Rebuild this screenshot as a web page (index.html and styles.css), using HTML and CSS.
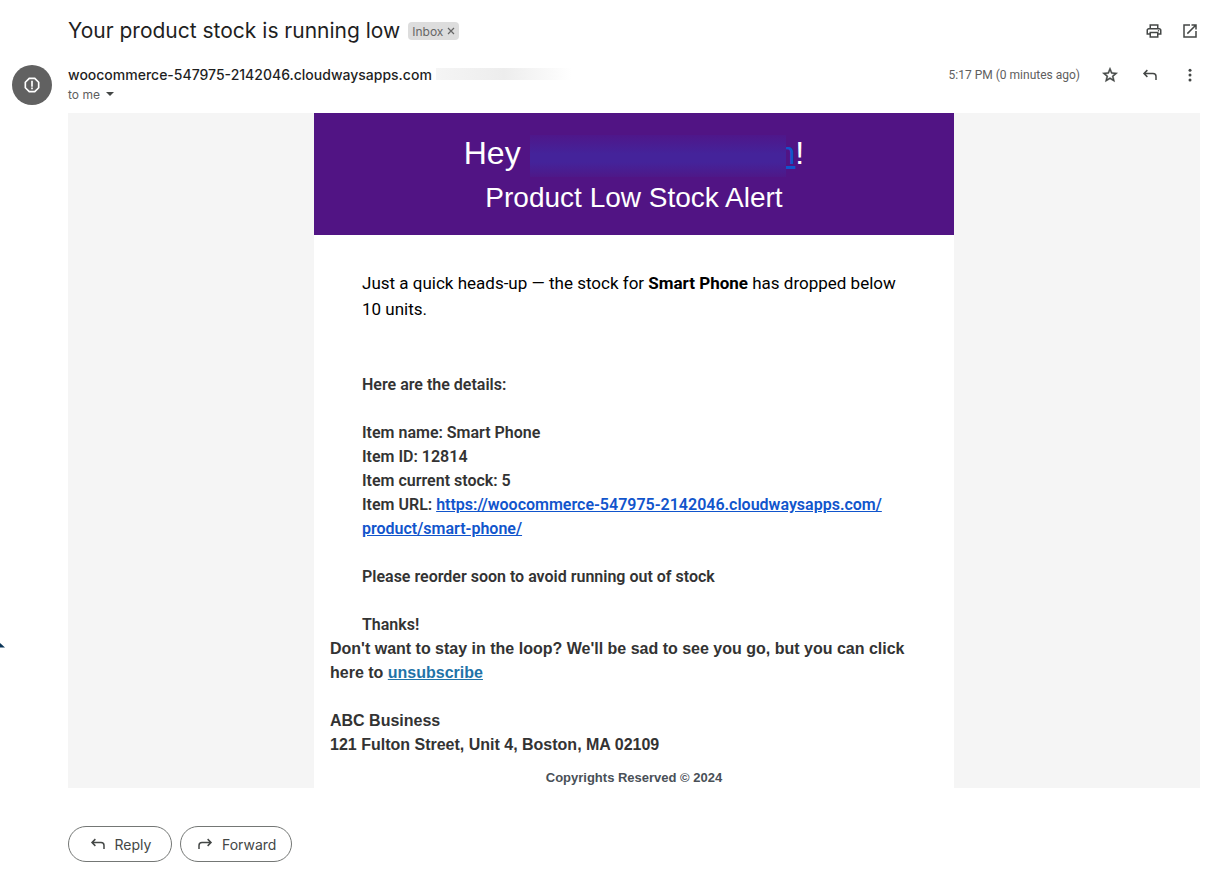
FILE: index.html
```html
<!DOCTYPE html>
<html lang="en">
<head>
    <meta charset="UTF-8">
    <meta name="viewport" content="width=device-width, initial-scale=1.0">
    <title>Your product stock is running low</title>
    <link rel="stylesheet" href="styles.css">
</head>
<body>
    <svg class="edge-mark" viewBox="0 0 5 5" aria-hidden="true"><path d="M0 0L5 4.500H0z"/></svg>

    <main class="mail">
        <header class="subject-bar">
            <h1 class="subject">Your product stock is running low</h1>
            <span class="label">Inbox <button class="label-remove" aria-label="Remove label Inbox"><svg viewBox="0 0 8 8"><path d="M1 1l6 6M7 1L1 7"/></svg></button></span>
            <div class="actions">
                <button class="icon-btn" aria-label="Print all">
                    <svg viewBox="0 0 24 24"><path d="M19 8h-1V3H6v5H5c-1.660 0-3 1.340-3 3v6h4v4h12v-4h4v-6c0-1.660-1.340-3-3-3zM8 5h8v3H8V5zm8 12v2H8v-4h8v2zm2-2v-2H6v2H4v-4c0-.55.45-1 1-1h14c.55 0 1 .45 1 1v4h-2z"/><circle cx="18" cy="11.500" r="1"/></svg>
                </button>
                <button class="icon-btn" aria-label="In new window">
                    <svg viewBox="0 0 24 24"><path d="M19 19H5V5h7V3H3v18h18v-9h-2v7zM14 3v2h3.590l-9.830 9.830 1.410 1.410L19 6.410V10h2V3h-7z"/></svg>
                </button>
            </div>
        </header>

        <section class="sender-bar">
            <div class="avatar">
                <svg viewBox="0 0 24 24"><path d="M15.730 3H8.270L3 8.270v7.460L8.270 21h7.460L21 15.730V8.270L15.730 3zM19 14.900L14.900 19H9.100L5 14.900V9.100L9.100 5h5.800L19 9.100v5.800zM11 7h2v7h-2zM11 15h2v2h-2z"/></svg>
            </div>
            <div class="sender">
                <div class="sender-line">
                    <strong class="sender-name">woocommerce-547975-2142046.cloudwaysapps.com</strong>
                    <span class="sender-hidden"></span>
                </div>
                <button class="recipient">to me <span class="caret"></span></button>
            </div>
            <span class="date">5:17 PM (0 minutes ago)</span>
            <div class="actions">
                <button class="icon-btn" aria-label="Star">
                    <svg class="star" viewBox="0 0 24 24"><path d="M22 9.240l-7.190-.62L12 2 9.190 8.630 2 9.240l5.460 4.730L5.820 21 12 17.270 18.180 21l-1.630-7.030L22 9.240zM12 15.400l-3.760 2.270 1-4.280-3.320-2.880 4.380-.38L12 6.100l1.710 4.040 4.380.38-3.320 2.880 1 4.280L12 15.400z"/></svg>
                </button>
                <button class="icon-btn" aria-label="Reply">
                    <svg viewBox="0 0 24 24"><path class="stroke" d="M8.500 5.500L4 10l4.500 4.500M4 10h12a4 4 0 0 1 4 4v4.500"/></svg>
                </button>
                <button class="icon-btn" aria-label="More">
                    <svg viewBox="0 0 24 24"><circle cx="12" cy="5.500" r="2"/><circle cx="12" cy="12" r="2"/><circle cx="12" cy="18.500" r="2"/></svg>
                </button>
            </div>
        </section>

        <div class="canvas">
            <article class="email">
                <div class="banner">
                    <h2 class="greeting">Hey <a href="#"><span class="redacted"></span>n</a>!</h2>
                    <p class="alert-title">Product Low Stock Alert</p>
                </div>
                <div class="content">
                    <p class="intro">Just a quick heads-up — the stock for <strong>Smart Phone</strong> has dropped below 10 units.</p>
                    <div class="details">
                        <p>Here are the details:</p>
                        <p>
                            Item name: Smart Phone<br>
                            Item ID: 12814<br>
                            Item current stock: 5<br>
                            Item URL: <a href="#">https://woocommerce-547975-2142046.cloudwaysapps.com/<wbr>product/smart-phone/</a>
                        </p>
                        <p>Please reorder soon to avoid running out of stock</p>
                        <p>Thanks!</p>
                    </div>
                </div>
                <footer class="email-footer">
                    <p>Don't want to stay in the loop? We'll be sad to see you go, but you can click here to <a href="#">unsubscribe</a></p>
                    <address>
                        ABC Business<br>
                        121 Fulton Street, Unit 4, Boston, MA 02109
                    </address>
                    <p class="copyright">Copyrights Reserved © 2024</p>
                </footer>
            </article>
        </div>

        <div class="reply-bar">
            <button class="pill">
                <svg viewBox="0 0 24 24"><path class="stroke" d="M8.500 5.500L4 10l4.500 4.500M4 10h12a4 4 0 0 1 4 4v4.500"/></svg>
                Reply
            </button>
            <button class="pill">
                <svg viewBox="0 0 24 24"><path class="stroke" d="M15.500 5.500L20 10l-4.500 4.500M20 10H8a4 4 0 0 0-4 4v4.500"/></svg>
                Forward
            </button>
        </div>
    </main>
</body>
</html>
```
FILE: styles.css
```css
* {
    margin: 0;
    padding: 0;
    box-sizing: border-box;
}

body {
    font-family: Inter, "Open Sans", sans-serif;
    background: #fff;
    color: #1f1f1f;
}

button {
    font-family: inherit;
    background: none;
    border: none;
    cursor: pointer;
}

.edge-mark {
    position: absolute;
    left: 0;
    top: 643px;
    width: 5px;
    height: 5px;
    fill: #0b3558;
}

.mail {
    padding: 13px 5px 16px 12px;
}

.subject-bar {
    display: flex;
    align-items: center;
    height: 36px;
    padding-left: 56px;
}

.subject {
    font-size: 21px;
    font-weight: 400;
    line-height: 28px;
}

.label {
    display: flex;
    align-items: center;
    gap: 4px;
    height: 18px;
    margin-left: 8px;
    padding: 0 4px;
    border-radius: 4px;
    background: #ddd;
    color: #666;
    font-size: 12px;
}

.label-remove {
    display: flex;
}

.label-remove svg {
    width: 8px;
    height: 8px;
    stroke: #666;
    stroke-width: 1.2;
}

.actions {
    display: flex;
    gap: 16px;
    margin-left: auto;
}

.icon-btn {
    display: flex;
    width: 20px;
    height: 20px;
    align-items: center;
    justify-content: center;
}

.icon-btn svg {
    width: 18px;
    height: 18px;
    fill: #444746;
}

.star {
    stroke: #444746;
    stroke-width: 0.6;
}

.stroke {
    fill: none;
    stroke: #444746;
    stroke-width: 2;
}

.sender-bar {
    display: flex;
    align-items: flex-start;
    height: 64px;
    padding-top: 16px;
}

.avatar {
    display: flex;
    align-items: center;
    justify-content: center;
    width: 40px;
    height: 40px;
    margin-right: 16px;
    border-radius: 50%;
    background: #616161;
}

.avatar svg {
    width: 20px;
    height: 20px;
    fill: #fff;
}

.sender-line {
    display: flex;
    align-items: center;
    gap: 4px;
    height: 18px;
}

.sender-name {
    font-size: 14px;
    font-weight: 500;
}

.sender-hidden {
    width: 136px;
    height: 12px;
    background: linear-gradient(90deg, #f5f5f5, #ededed 50%, #fff);
}

.recipient {
    display: flex;
    align-items: center;
    gap: 6px;
    height: 22px;
    color: #5e5e5e;
    font-size: 12px;
}

.caret {
    border: 4px solid transparent;
    border-top-color: #444746;
    border-bottom: none;
}

.date {
    margin-left: auto;
    line-height: 20px;
    color: #5e5e5e;
    font-family: Roboto, sans-serif;
    font-size: 12px;
}

.sender-bar .actions {
    gap: 20px;
    margin-left: 20px;
}

.canvas {
    margin-left: 56px;
    background: #f5f5f5;
}

.email {
    max-width: 640px;
    margin: 0 auto;
    background: #fff;
}

.banner {
    padding: 16px;
    background: #511484;
    color: #fff;
    font-family: "Liberation Sans", Arial, sans-serif;
    text-align: center;
}

.greeting {
    font-size: 32px;
    font-weight: 400;
    line-height: 48px;
}

.greeting a {
    color: #15c;
}

.redacted {
    display: inline-block;
    position: relative;
    width: 256px;
    height: 42px;
    margin-right: -8px;
    vertical-align: middle;
    background: linear-gradient(#4e178a, #44239a 45%, #44239a 65%, #4e1888);
}

.alert-title {
    font-size: 28px;
    line-height: 42px;
}

.content {
    padding: 35px 48px 0;
    font-family: Roboto, sans-serif;
}

.intro {
    margin-bottom: 51px;
    color: #000;
    font-size: 17px;
    line-height: 26px;
}

.details {
    color: #333;
    font-size: 16px;
    font-weight: 600;
    line-height: 24px;
}

.details p + p {
    margin-top: 24px;
}

.details a {
    color: #15c;
}

.email-footer {
    padding: 0 16px;
    color: #333;
    font-family: "Liberation Sans", Arial, sans-serif;
    font-size: 16px;
    font-weight: 700;
    line-height: 24px;
}

.email-footer a {
    color: #1f73a8;
}

address {
    margin-top: 24px;
    font-style: normal;
}

.email-footer .copyright {
    padding-top: 11px;
    color: #495057;
    font-size: 13px;
    line-height: 20px;
    text-align: center;
}

.reply-bar {
    display: flex;
    gap: 8px;
    margin: 38px 0 0 56px;
}

.pill {
    display: flex;
    align-items: center;
    justify-content: center;
    gap: 8px;
    min-width: 104px;
    height: 36px;
    padding: 0 15px;
    border: 1px solid #747775;
    border-radius: 18px;
    color: #444746;
    font-size: 14px;
}

.pill svg {
    width: 18px;
    height: 18px;
}
```
